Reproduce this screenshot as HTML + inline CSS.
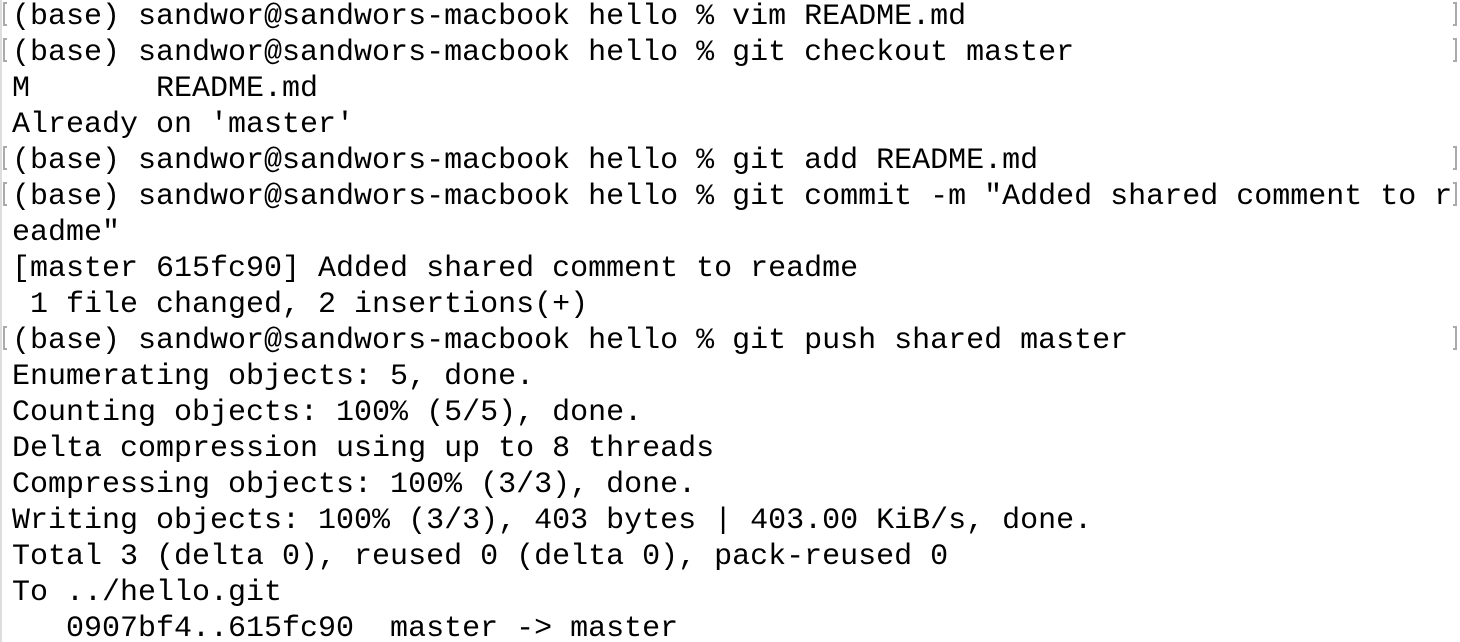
<!DOCTYPE html>
<html><head><style>
html,body{margin:0;padding:0;background:#fff;width:1460px;height:642px;overflow:hidden;position:relative}
.l{position:absolute;left:12px;font-family:"Liberation Mono",monospace;font-size:30px;line-height:36px;white-space:pre;color:#000;letter-spacing:0}
.edge{position:absolute;left:0;top:0;width:2px;height:642px;background:#ddd}
.bl{position:absolute;left:3px;width:4px;height:24px;border:2px solid #aaa;border-right:none;box-sizing:border-box}
.br{position:absolute;left:1453px;width:4px;height:24px;border:2px solid #aaa;border-left:none;box-sizing:border-box}
</style></head><body>
<div class="edge"></div>
<div class="l" style="top:-1px">(base) sandwor@sandwors-macbook hello % vim README.md</div>
<div class="l" style="top:35px">(base) sandwor@sandwors-macbook hello % git checkout master</div>
<div class="l" style="top:71px">M       README.md</div>
<div class="l" style="top:107px">Already on 'master'</div>
<div class="l" style="top:143px">(base) sandwor@sandwors-macbook hello % git add README.md</div>
<div class="l" style="top:179px">(base) sandwor@sandwors-macbook hello % git commit -m "Added shared comment to r</div>
<div class="l" style="top:215px">eadme"</div>
<div class="l" style="top:251px">[master 615fc90] Added shared comment to readme</div>
<div class="l" style="top:287px"> 1 file changed, 2 insertions(+)</div>
<div class="l" style="top:323px">(base) sandwor@sandwors-macbook hello % git push shared master</div>
<div class="l" style="top:359px">Enumerating objects: 5, done.</div>
<div class="l" style="top:395px">Counting objects: 100% (5/5), done.</div>
<div class="l" style="top:431px">Delta compression using up to 8 threads</div>
<div class="l" style="top:467px">Compressing objects: 100% (3/3), done.</div>
<div class="l" style="top:503px">Writing objects: 100% (3/3), 403 bytes | 403.00 KiB/s, done.</div>
<div class="l" style="top:539px">Total 3 (delta 0), reused 0 (delta 0), pack-reused 0</div>
<div class="l" style="top:575px">To ../hello.git</div>
<div class="l" style="top:611px">   0907bf4..615fc90  master -&gt; master</div>
<div class="bl" style="top:2px"></div><div class="br" style="top:2px"></div>
<div class="bl" style="top:38px"></div><div class="br" style="top:38px"></div>
<div class="bl" style="top:146px"></div><div class="br" style="top:146px"></div>
<div class="bl" style="top:182px"></div><div class="br" style="top:182px"></div>
<div class="bl" style="top:326px"></div><div class="br" style="top:326px"></div>
</body></html>
